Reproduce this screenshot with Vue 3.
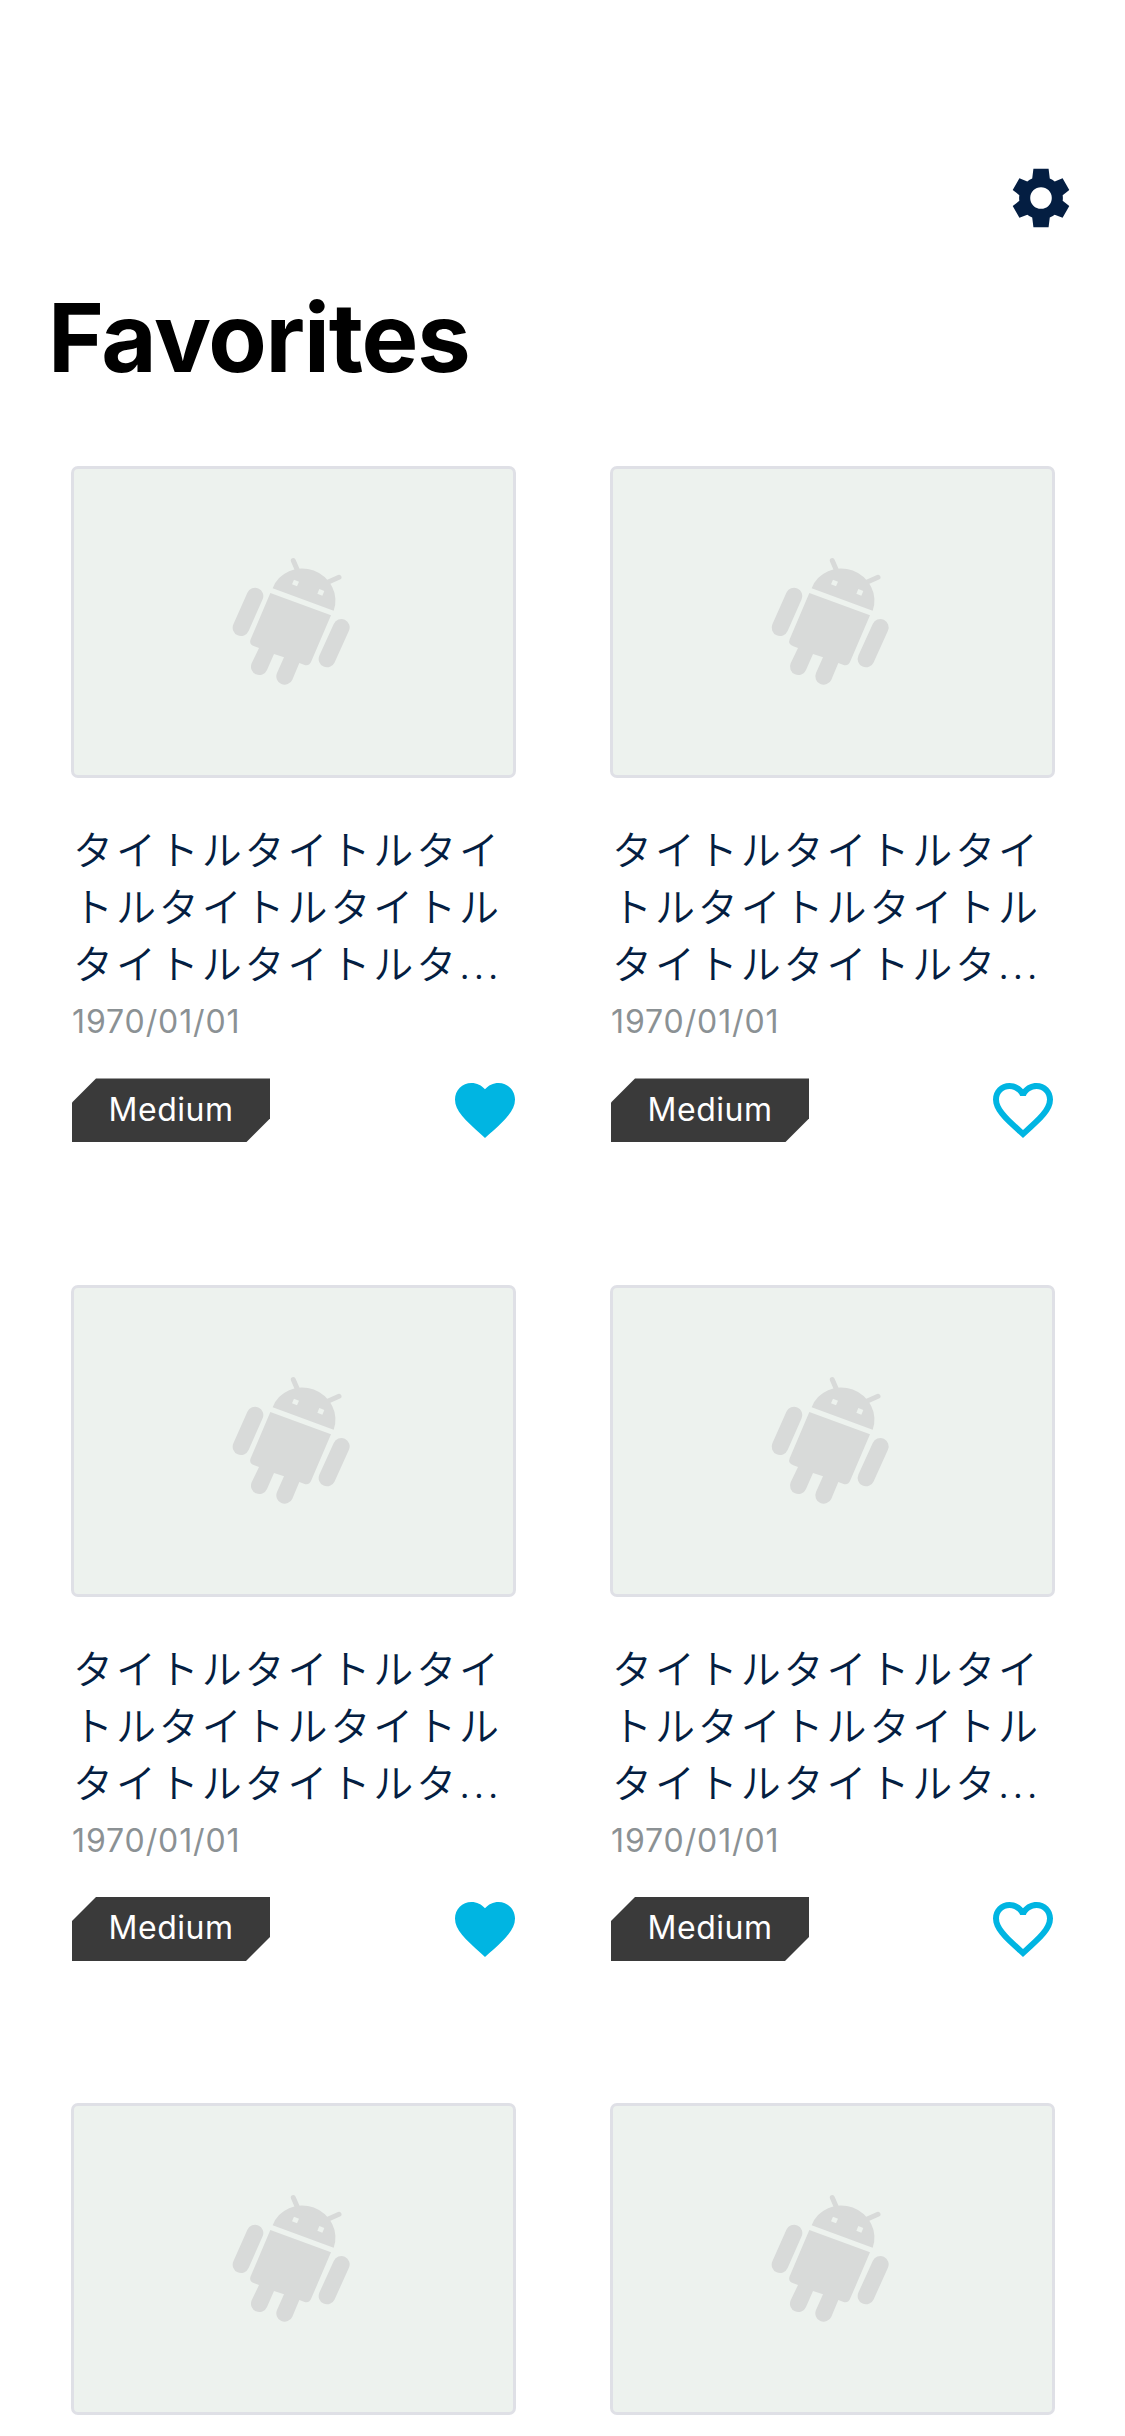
<script setup>
const title = 'タイトル'.repeat(7) + 'タ...'
const items = Array.from({ length: 6 }, (_, i) => ({
  id: i,
  title,
  date: '1970/01/01',
  level: 'Medium',
  favorited: i % 2 === 0,
}))
</script>

<template>
  <main class="screen">
    <header class="toolbar">
      <svg class="gear" viewBox="0 0 24 24" aria-label="Settings">
        <path d="M19.43 12.98c.04-.32.07-.64.07-.98s-.03-.66-.07-.98l2.27-1.77-2.3-4.02-2.7 1.07c-.52-.4-1.08-.73-1.69-.98L14.6 2H9.4l-.41 3.32c-.61.25-1.17.59-1.69.98L4.6 5.23 2.3 9.25l2.27 1.77c-.04.32-.07.65-.07.98s.03.66.07.98L2.3 14.75l2.3 4.02 2.7-1.07c.52.4 1.08.73 1.69.98L9.4 22h5.2l.41-3.32c.61-.25 1.17-.59 1.69-.98l2.7 1.07 2.3-4.02-2.27-1.77zM12 15.7a3.7 3.7 0 1 1 0-7.4 3.7 3.7 0 0 1 0 7.4z" />
      </svg>
    </header>
    <h1 class="heading">Favorites</h1>
    <section class="grid">
      <article v-for="item in items" :key="item.id" class="card">
        <div class="thumb">
          <svg class="robot" viewBox="0 0 450 480">
            <!-- antennae -->
            <path class="limb antenna" d="M220 62L233 92M357 112L325 126" />
            <!-- head with eye cut-outs -->
            <path fill-rule="evenodd" d="M158 145A97 92 20 0 1 341 212ZM222 119L216 133 231 139 237 125ZM298 147L292 161 307 167 313 153Z" />
            <!-- arms -->
            <path class="limb arm" d="M105 168L63 263M364 262L321 357" />
            <!-- torso and legs -->
            <path d="M151 159L333 226 274 364Q268 379 254 375L238 369 217 419A25 25 0 0 1 171 399L192 352 162 342 141 390A25 25 0 0 1 95 370L117 324 103 319Q86 313 92 298Z" />
          </svg>
        </div>
        <p class="title">{{ item.title }}</p>
        <p class="date">{{ item.date }}</p>
        <div class="footer">
          <span class="badge">{{ item.level }}</span>
          <svg class="heart" viewBox="0 0 24 24">
            <path v-if="item.favorited" d="M12 21.35l-1.45-1.32C5.4 15.36 2 12.28 2 8.5 2 5.42 4.42 3 7.5 3c1.74 0 3.41.81 4.5 2.09C13.09 3.81 14.76 3 16.5 3 19.58 3 22 5.42 22 8.5c0 3.78-3.4 6.86-8.55 11.54L12 21.35z" />
            <path v-else d="M16.5 3c-1.74 0-3.41.81-4.5 2.09C10.91 3.81 9.24 3 7.5 3 4.42 3 2 5.42 2 8.5c0 3.78 3.4 6.86 8.55 11.54L12 21.35l1.45-1.32C18.6 15.36 22 12.28 22 8.5 22 5.42 19.58 3 16.5 3zm-4.4 15.55l-.1.1-.1-.1C7.14 14.24 4 11.39 4 8.5 4 6.5 5.5 5 7.5 5c1.54 0 3.04.99 3.57 2.36h1.87C13.46 5.99 14.96 5 16.5 5c2 0 3.5 1.5 3.5 3.5 0 2.89-3.14 5.74-7.9 10.05z" />
          </svg>
        </div>
      </article>
    </section>
  </main>
</template>

<style>
body { margin: 0; background: #fff; }
</style>

<style scoped>
.screen {
  box-sizing: border-box;
  width: 1125px;
  height: 2436px;
  overflow: hidden;
  background: #fff;
  font-family: Inter, "Noto Sans CJK JP", sans-serif;
}
.toolbar {
  display: flex;
  justify-content: flex-end;
  padding: 163px 49px 0 0;
}
.gear { display: block; width: 70px; height: 70px; fill: #041e42; }
.heading {
  margin: 46px 0 0 48px;
  font-size: 95.5px;
  line-height: 116px;
  font-weight: 700;
  letter-spacing: -1.2px;
  color: #000;
}
.grid {
  display: grid;
  grid-template-columns: 445px 445px;
  grid-auto-rows: 818.5px;
  column-gap: 94px;
  margin: 71.4px 0 0 71px;
}
.thumb {
  box-sizing: border-box;
  height: 312px;
  border: 3px solid #dfe0e6;
  border-radius: 7px;
  background: #edf2ee;
}
.robot {
  display: block;
  width: 150px;
  height: 160px;
  margin: 71px 0 0 146px;
  fill: #d8dad9;
}
.limb { fill: none; stroke: #d8dad9; stroke-linecap: round; }
.antenna { stroke-width: 15; }
.arm { stroke-width: 50; }
.title {
  width: 440px;
  margin: 44px 0 0 2px;
  font-weight: 350;
  font-size: 40px;
  line-height: 57px;
  letter-spacing: 2.9px;
  word-break: break-all;
  color: #041e42;
}
.date {
  margin: 9px 0 0 1px;
  font-size: 32px;
  line-height: 39px;
  letter-spacing: 0.9px;
  color: #8b9194;
}
.footer {
  display: flex;
  justify-content: space-between;
  margin: 33px -4.5px 0 1px;
}
.card:nth-child(even) .footer { margin-right: -4px; }
.badge {
  display: flex;
  box-sizing: border-box;
  align-items: center;
  justify-content: center;
  width: 198px;
  height: 64px;
  margin-top: 4px;
  padding-bottom: 2px;
  background: #3a3a3a;
  clip-path: polygon(24px 0, 100% 0, 100% 40px, 174px 100%, 0 100%, 0 24px);
  color: #fff;
  font-size: 32px;
  letter-spacing: 0.5px;
}
.heart { width: 72px; height: 72px; fill: #00b5e2; }
</style>
